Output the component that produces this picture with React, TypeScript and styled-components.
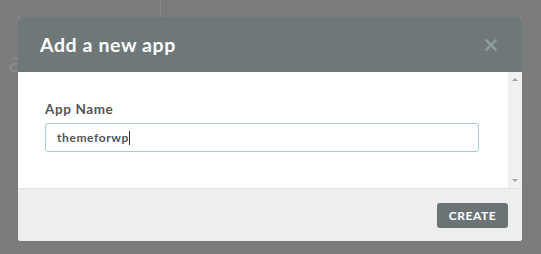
import React from "react";
import styled, { createGlobalStyle } from "styled-components";

const GlobalStyle = createGlobalStyle`
  html, body {
    margin: 0;
    padding: 0;
    background: #7b7b7b;
    font-family: "Lato", "Open Sans", sans-serif;
  }
`;

const App = () => {
  const name = "themeforwp";

  return (
    <Page>
      <GlobalStyle />
      <Backdrop>
        <BgLine />
        <BgText>a</BgText>
      </Backdrop>
      <Modal>
        <Header>
          <Title>Add a new app</Title>
          <CloseButton aria-label="close">
            <svg width="12" height="12" viewBox="0 0 12 12">
              <path
                d="M1.5 1.5 L10.5 10.5 M10.5 1.5 L1.5 10.5"
                stroke="#8f9a9b"
                strokeWidth="2.6"
                strokeLinecap="square"
              />
            </svg>
          </CloseButton>
        </Header>
        <Body>
          <Content>
            <Label>App Name</Label>
            <Field>
              <FieldText>{name}</FieldText>
              <Caret />
            </Field>
          </Content>
          <Scrollbar>
            <Arrow $dir="up" />
            <Arrow $dir="down" />
          </Scrollbar>
        </Body>
        <Footer>
          <CreateButton>CREATE</CreateButton>
        </Footer>
      </Modal>
    </Page>
  );
};
export default App;

const Page = styled.div`
  position: relative;
  width: 541px;
  height: 254px;
  overflow: hidden;
  background: #7b7b7b;
`;

const Backdrop = styled.div`
  display: flex;
  padding-left: 8px;
  padding-top: 42px;
`;

const BgLine = styled.div`
  position: absolute;
  left: 160px;
  top: 0;
  width: 1px;
  height: 17px;
  background: #888;
`;

const BgText = styled.span`
  font-size: 28px;
  color: #8a8a8a;
  font-family: "Open Sans", sans-serif;
`;

const Modal = styled.div`
  position: absolute;
  left: 18px;
  top: 17px;
  width: 504px;
  height: 224px;
  display: flex;
  flex-direction: column;
  border-radius: 3px;
  overflow: hidden;
  background: #fff;
`;

const Header = styled.div`
  height: 55px;
  display: flex;
  align-items: center;
  justify-content: space-between;
  padding: 0 25px 0 22px;
  background: #6e7879;
`;

const Title = styled.h2`
  margin: 0;
  font-size: 19.5px;
  font-weight: 700;
  color: #fff;
  letter-spacing: 0.6px;
`;

const CloseButton = styled.button`
  border: none;
  background: transparent;
  padding: 0;
  display: flex;
  cursor: pointer;
`;

const Body = styled.div`
  height: 116px;
  display: flex;
`;

const Content = styled.div`
  flex: 1;
  padding: 29px 29px 0 27px;
  display: flex;
  flex-direction: column;
`;

const Label = styled.div`
  font-size: 13.5px;
  font-weight: 700;
  color: #555;
  letter-spacing: 0.6px;
  margin-bottom: 6px;
`;

const Field = styled.div`
  height: 29px;
  box-sizing: border-box;
  border: 1px solid #a6ccd8;
  border-radius: 3px;
  padding: 0 11px;
  display: flex;
  align-items: center;
`;

const FieldText = styled.span`
  font-size: 12px;
  font-weight: 700;
  color: #555;
  letter-spacing: 0.6px;
`;

const Caret = styled.span`
  width: 1px;
  height: 14px;
  background: #333;
`;

const Scrollbar = styled.div`
  width: 14px;
  background: #f1f1f1;
  display: flex;
  flex-direction: column;
  justify-content: space-between;
  align-items: center;
  padding: 6px 0;
`;

const Arrow = styled.span<{ $dir: "up" | "down" }>`
  width: 0;
  height: 0;
  border-left: 3px solid transparent;
  border-right: 3px solid transparent;
  ${(p) =>
    p.$dir === "up"
      ? "border-bottom: 3px solid #a3a3a3;"
      : "border-top: 3px solid #a3a3a3;"}
`;

const Footer = styled.div`
  flex: 1;
  display: flex;
  align-items: center;
  justify-content: flex-end;
  padding: 0 14px 0 0;
  background: #eeeeee;
  border-top: 1px solid #e2e2e2;
`;

const CreateButton = styled.button`
  width: 71px;
  height: 25px;
  border: none;
  border-radius: 3px;
  background: #6a7475;
  color: #fff;
  font-family: "Lato", "Open Sans", sans-serif;
  font-size: 12px;
  font-weight: 700;
  letter-spacing: 0.6px;
  cursor: pointer;
`;
